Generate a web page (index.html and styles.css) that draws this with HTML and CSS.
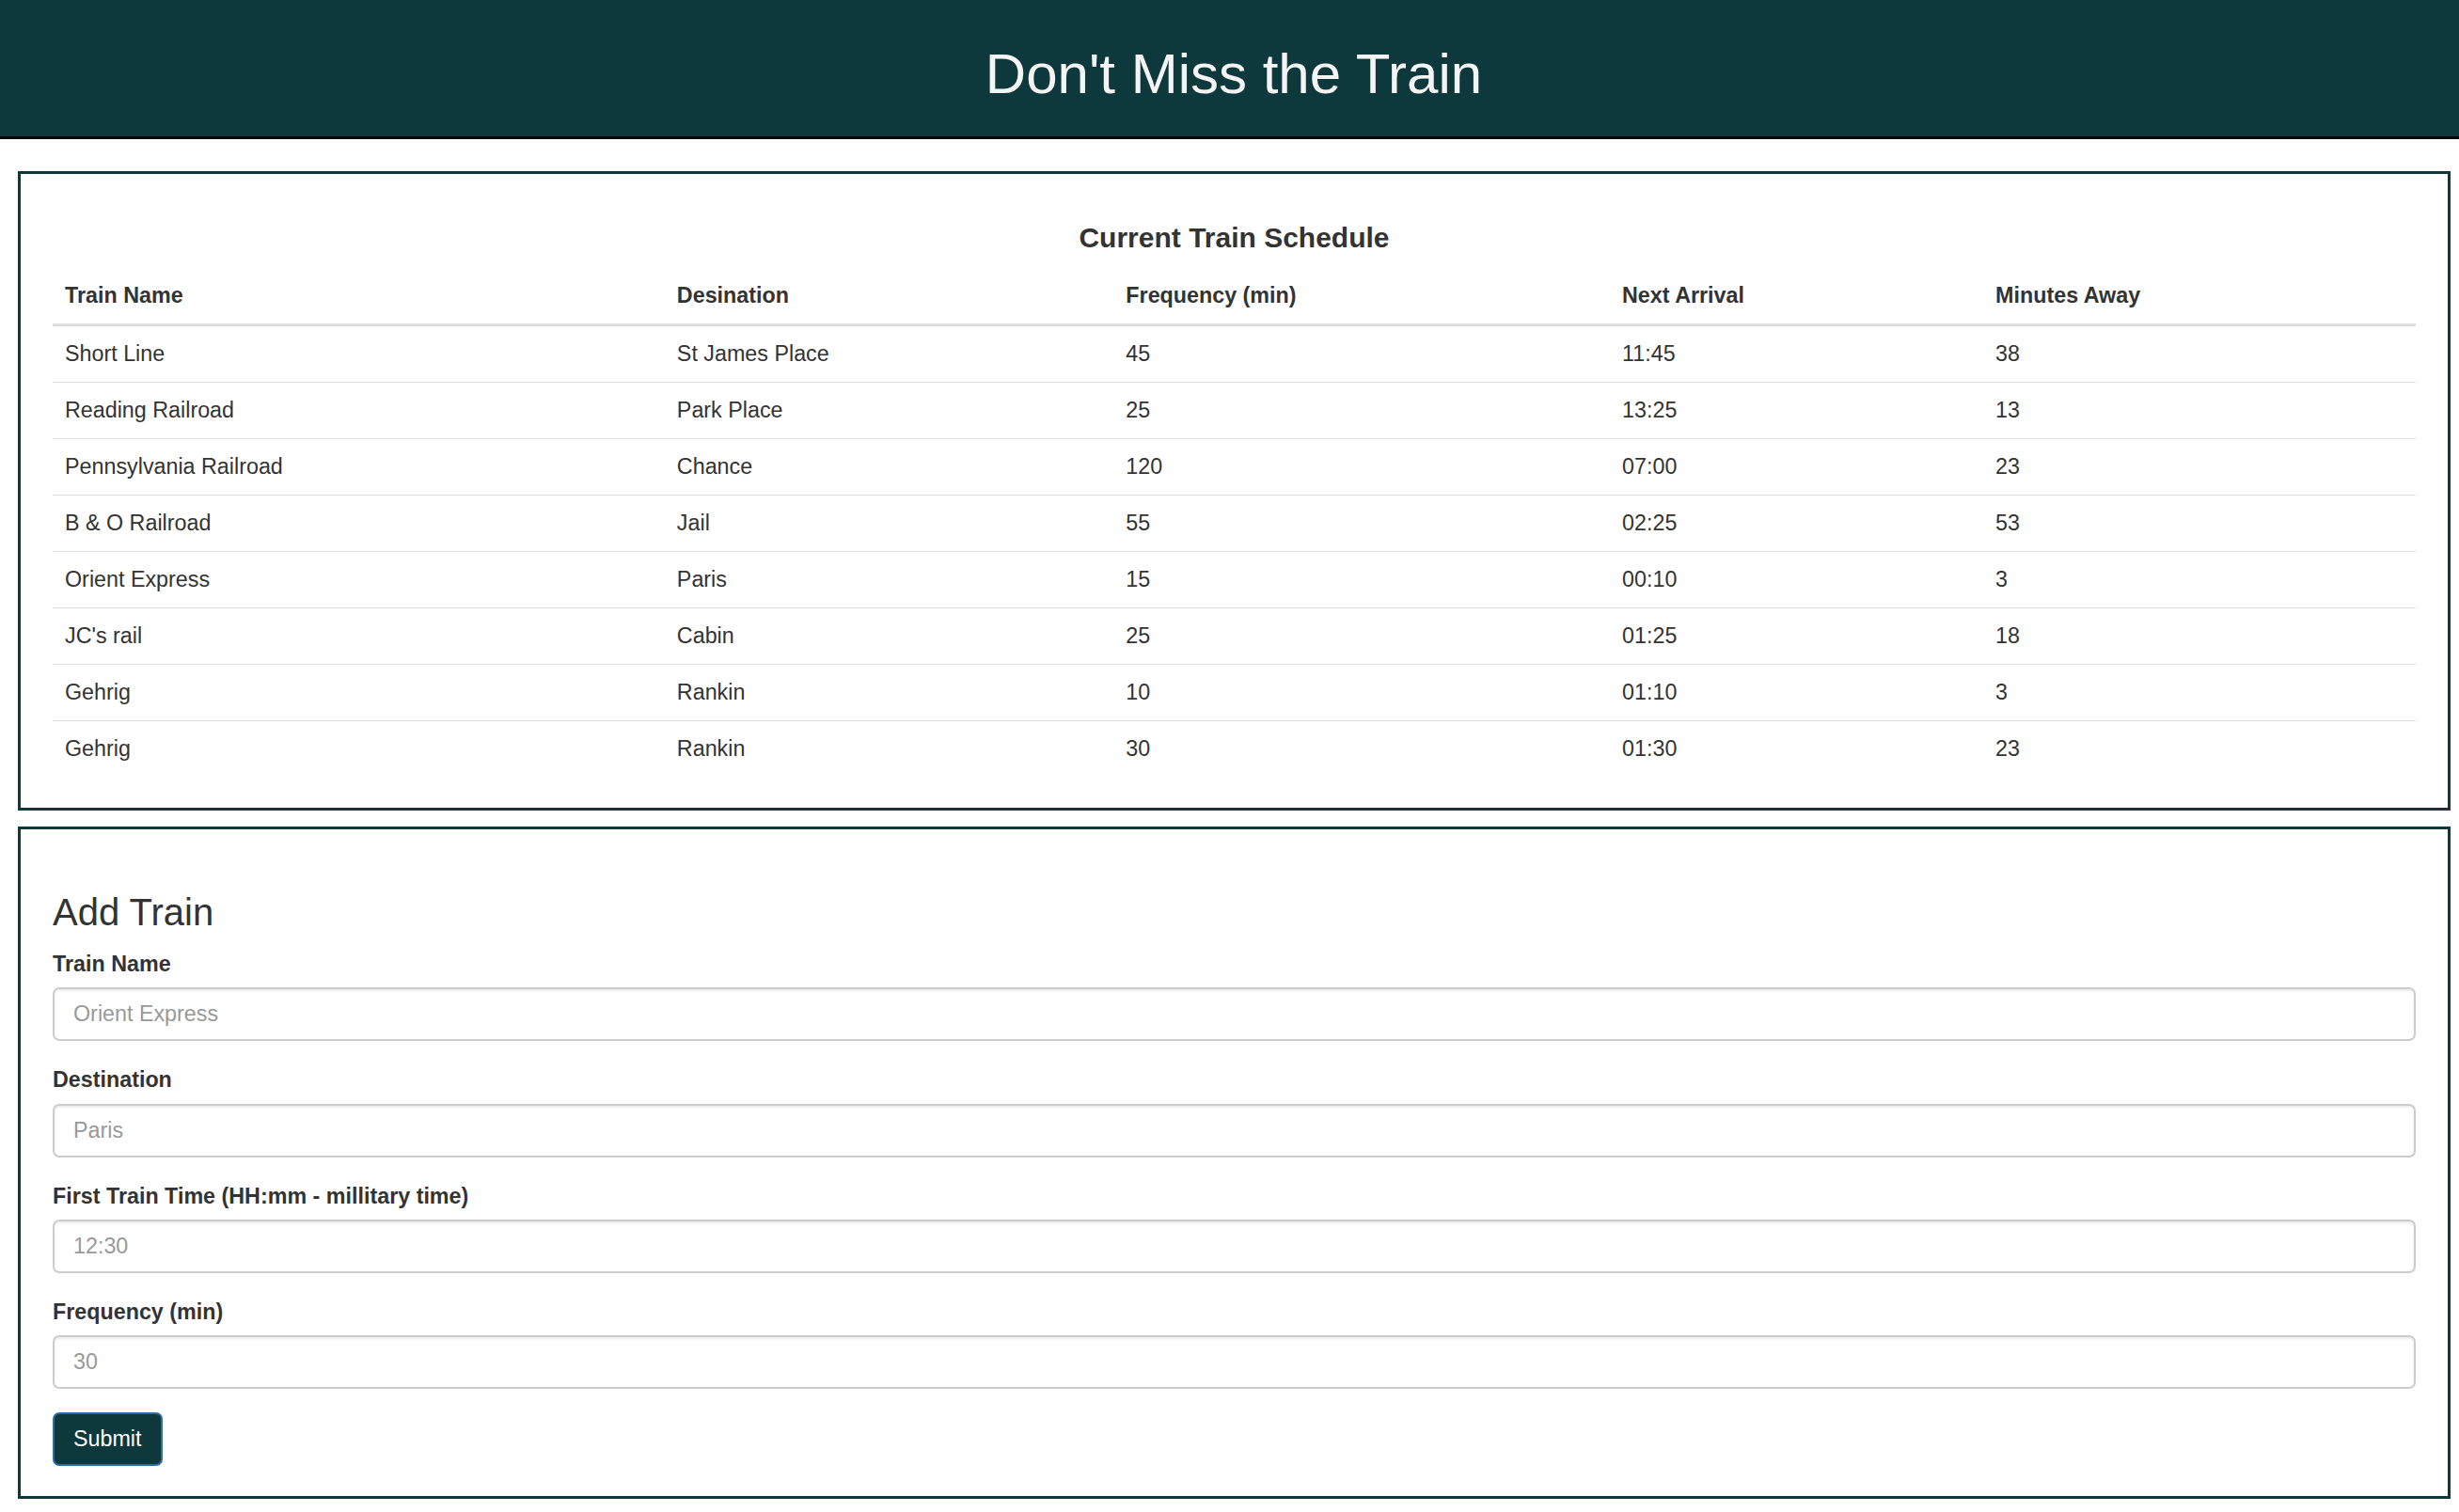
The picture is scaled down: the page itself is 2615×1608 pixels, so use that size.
FILE: index.html
```html
<!DOCTYPE html>
<html lang="en">
<head>
<meta charset="utf-8">
<title>Don't Miss the Train</title>
<link rel="stylesheet" href="styles.css">
</head>
<body>
<header class="topbar">
  <h1 class="topbar-title">Don't Miss the Train</h1>
</header>
<main class="page">
  <section class="panel panel-schedule">
    <h4 class="schedule-title">Current Train Schedule</h4>
    <table class="schedule">
      <thead>
        <tr>
          <th class="col-name">Train Name</th>
          <th class="col-dest">Desination</th>
          <th class="col-freq">Frequency (min)</th>
          <th class="col-next">Next Arrival</th>
          <th class="col-away">Minutes Away</th>
        </tr>
      </thead>
      <tbody>
        <tr><td>Short Line</td><td>St James Place</td><td>45</td><td>11:45</td><td>38</td></tr>
        <tr><td>Reading Railroad</td><td>Park Place</td><td>25</td><td>13:25</td><td>13</td></tr>
        <tr><td>Pennsylvania Railroad</td><td>Chance</td><td>120</td><td>07:00</td><td>23</td></tr>
        <tr><td>B &amp; O Railroad</td><td>Jail</td><td>55</td><td>02:25</td><td>53</td></tr>
        <tr><td>Orient Express</td><td>Paris</td><td>15</td><td>00:10</td><td>3</td></tr>
        <tr><td>JC's rail</td><td>Cabin</td><td>25</td><td>01:25</td><td>18</td></tr>
        <tr><td>Gehrig</td><td>Rankin</td><td>10</td><td>01:10</td><td>3</td></tr>
        <tr><td>Gehrig</td><td>Rankin</td><td>30</td><td>01:30</td><td>23</td></tr>
      </tbody>
    </table>
  </section>
  <section class="panel panel-form">
    <h3 class="form-title">Add Train</h3>
    <form class="train-form">
      <div class="form-group">
        <label class="form-label" for="name">Train Name</label>
        <input class="form-input" id="name" type="text" placeholder="Orient Express">
      </div>
      <div class="form-group">
        <label class="form-label" for="dest">Destination</label>
        <input class="form-input" id="dest" type="text" placeholder="Paris">
      </div>
      <div class="form-group">
        <label class="form-label" for="first">First Train Time (HH:mm - millitary time)</label>
        <input class="form-input" id="first" type="text" placeholder="12:30">
      </div>
      <div class="form-group">
        <label class="form-label" for="freq">Frequency (min)</label>
        <input class="form-input" id="freq" type="text" placeholder="30">
      </div>
      <button class="btn-submit" type="button">Submit</button>
    </form>
  </section>
</main>
</body>
</html>
```
FILE: styles.css
```css
* { box-sizing: border-box; }

html, body {
  margin: 0;
  padding: 0;
  background: #ffffff;
}

body {
  font-family: "Liberation Sans", Arial, Helvetica, sans-serif;
  font-size: 23.3px;
  line-height: 33.3px;
  color: #333333;
}

.topbar {
  height: 148px;
  background: #0e393c;
  border-bottom: 3px solid #000000;
  display: flex;
  align-items: center;
  justify-content: center;
  padding-left: 9px;
}

.topbar-title {
  margin: 0;
  font-size: 60px;
  font-weight: 400;
  line-height: 66px;
  color: #f4f4f4;
  padding-top: 12px;
}

.page {
  padding: 34px 9px 15px 19px;
  display: flex;
  flex-direction: column;
  gap: 17px;
}

.panel {
  border: 3px solid #0e393c;
  padding: 0 34px;
  background: #ffffff;
}

.panel-schedule {
  padding-top: 34px;
  padding-bottom: 33px;
}

.schedule-title {
  margin: 17px 0 16px 0;
  font-size: 30px;
  line-height: 33px;
  font-weight: 700;
  text-align: center;
  color: #333333;
}

.schedule {
  width: 100%;
  border-collapse: collapse;
  border-spacing: 0;
}

.schedule th,
.schedule td {
  padding: 13px 13px;
  line-height: 33px;
  text-align: left;
  vertical-align: top;
}

.schedule th {
  font-weight: 700;
  border-bottom: 3px solid #dddddd;
}

.schedule td {
  border-top: 1px solid #dddddd;
  font-weight: 400;
}

.schedule tbody tr:first-child td {
  border-top: 0;
}

.col-name { width: 25.9%; }
.col-dest { width: 19.0%; }
.col-freq { width: 21.0%; }
.col-next { width: 15.8%; }
.col-away { width: 18.3%; }

.panel-form {
  padding-top: 33px;
  padding-bottom: 32px;
}

.form-title {
  margin: 33px 0 17px 0;
  font-size: 40px;
  line-height: 44px;
  font-weight: 400;
  color: #333333;
}

.train-form {
  display: flex;
  flex-direction: column;
}

.form-group {
  display: flex;
  flex-direction: column;
  margin-bottom: 25px;
}

.form-label {
  font-weight: 700;
  font-size: 23.3px;
  line-height: 33.3px;
  margin-bottom: 8px;
  color: #333333;
}

.form-input {
  width: 100%;
  height: 57px;
  padding: 10px 20px;
  font-family: "Liberation Sans", Arial, Helvetica, sans-serif;
  font-size: 23.3px;
  line-height: 33px;
  color: #555555;
  background: #ffffff;
  border: 2px solid #cccccc;
  border-radius: 7px;
  box-shadow: inset 0 2px 2px rgba(0, 0, 0, 0.075);
  outline: none;
}

.form-input::placeholder {
  color: #999999;
}

.btn-submit {
  align-self: flex-start;
  height: 57px;
  padding: 10px 20px;
  font-family: "Liberation Sans", Arial, Helvetica, sans-serif;
  font-size: 23.3px;
  line-height: 33px;
  color: #ffffff;
  background: #0e393c;
  border: 2px solid #2e6da4;
  border-radius: 7px;
  cursor: pointer;
}
```
